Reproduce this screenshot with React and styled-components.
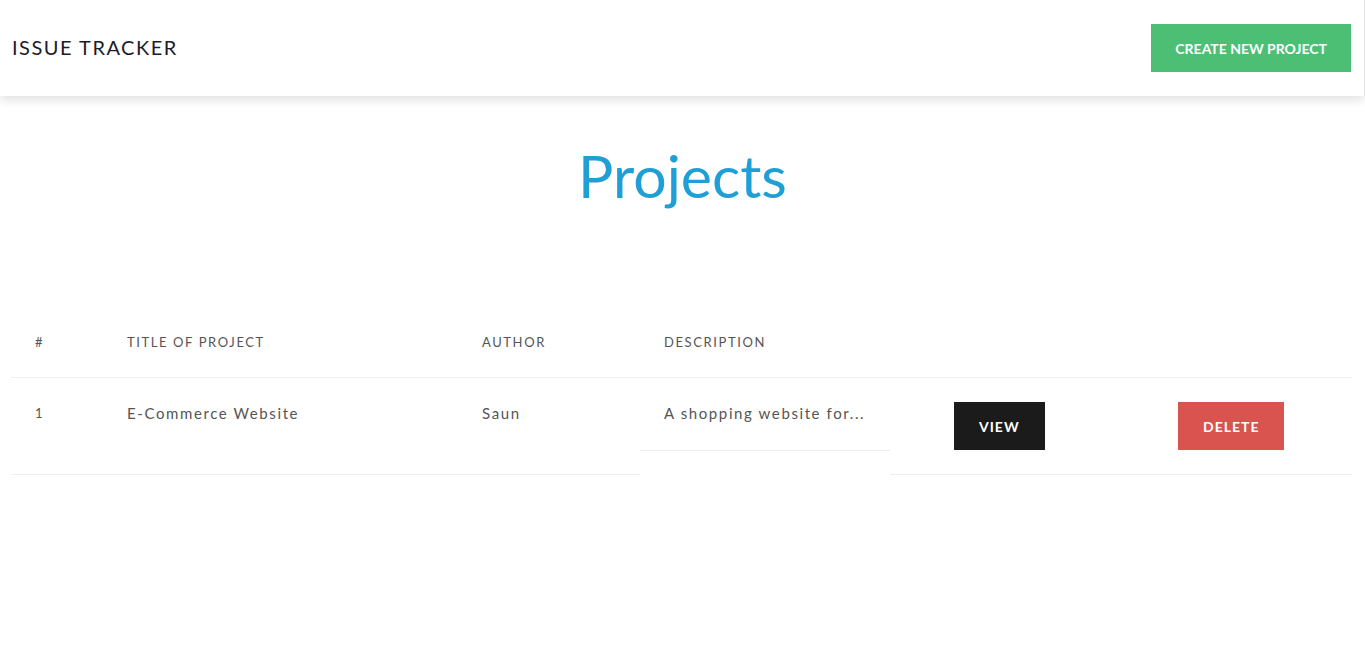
import React from "react";
import styled, { createGlobalStyle } from "styled-components";

const GlobalStyle = createGlobalStyle`
  body {
    margin: 0;
    background: #fff;
    font-family: "Lato", "Open Sans", sans-serif;
  }
`;

const Nav = styled.nav`
  height: 96px;
  display: flex;
  align-items: center;
  justify-content: space-between;
  padding: 0 13px 0 12px;
  background: #fff;
  box-shadow: 0 4px 10px rgba(0, 0, 0, 0.12);
  border-right: 1px solid #e4e4e4;
  box-sizing: border-box;
  position: relative;
`;

const Brand = styled.div`
  font-size: 20px;
  letter-spacing: 1.5px;
  color: #1b1b2a;
  margin-top: -3px;
`;

const Button = styled.button`
  border: none;
  cursor: pointer;
  height: 48px;
  padding: 0 ${(p) => p.$pad || 24}px;
  font-family: "Lato", sans-serif;
  font-weight: 700;
  font-size: ${(p) => p.$size || 14}px;
  letter-spacing: ${(p) => p.$spacing || 0}px;
  color: #fff;
  background: ${(p) => p.$bg};
`;

const Title = styled.h1`
  margin: 43px 0 0;
  text-align: center;
  font-size: 59px;
  line-height: 74px;
  font-weight: 400;
  color: #1f9fd5;
`;

const Table = styled.div`
  margin: 95px 13px 0 11px;
  display: grid;
  grid-template-columns: 92px 355px 182px 250px 224px 238px;
  align-items: start;
`;

const HeadCell = styled.div`
  padding: 23px 24px 25px;
  line-height: 22px;
  font-size: 13px;
  letter-spacing: 1.6px;
  text-transform: uppercase;
  color: #555;
  border-bottom: 1px solid #eee;
  height: 70px;
  box-sizing: border-box;
`;

const Cell = styled.div`
  padding: 24px 24px;
  line-height: 22px;
  font-size: ${(p) => (p.$small ? 13 : 15)}px;
  letter-spacing: 1.6px;
  color: #555;
  border-bottom: 1px solid #eee;
  height: ${(p) => (p.$short ? 73 : 97)}px;
  box-sizing: border-box;
  white-space: nowrap;
  overflow: hidden;
`;

const ActionCell = styled(Cell)`
  padding: 24px 0 0 64px;
`;

const projects = [
  { id: 1, title: "E-Commerce Website", author: "Saun", description: "A shopping website for..." },
];

export default function App() {
  return (
    <>
      <GlobalStyle />
      <Nav>
        <Brand>ISSUE TRACKER</Brand>
        <Button $bg="#4cbf74" $pad={24} $size={14}>
          CREATE NEW PROJECT
        </Button>
      </Nav>
      <Title>Projects</Title>
      <Table>
        <HeadCell>#</HeadCell>
        <HeadCell>Title of Project</HeadCell>
        <HeadCell>Author</HeadCell>
        <HeadCell>Description</HeadCell>
        <HeadCell />
        <HeadCell />
        {projects.map((p) => (
          <React.Fragment key={p.id}>
            <Cell $small>{p.id}</Cell>
            <Cell>{p.title}</Cell>
            <Cell>{p.author}</Cell>
            <Cell $short>{p.description}</Cell>
            <ActionCell>
              <Button $bg="#1b1b1b" $pad={25} $spacing={1}>VIEW</Button>
            </ActionCell>
            <ActionCell>
              <Button $bg="#d9534f" $pad={25} $spacing={1}>DELETE</Button>
            </ActionCell>
          </React.Fragment>
        ))}
      </Table>
    </>
  );
}
